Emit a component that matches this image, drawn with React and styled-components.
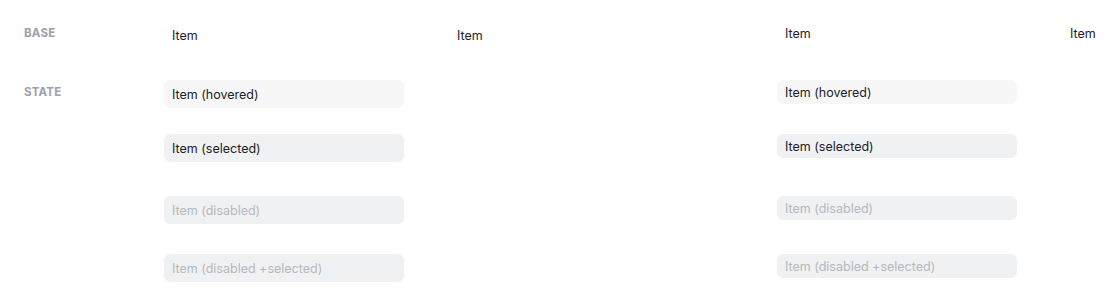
import React from 'react';
import styled, { createGlobalStyle } from 'styled-components';

const GlobalStyle = createGlobalStyle`
  body {
    margin: 0;
    background: #fff;
    font-family: Inter, "Noto Sans", sans-serif;
    overflow: hidden;
  }
`;

const Page = styled.div`
  width: 1120px;
  height: 306px;
  overflow: hidden;
`;

const Row = styled.div`
  display: flex;
  padding-top: ${p => p.$top}px;
  height: ${p => p.$height}px;
  box-sizing: border-box;
`;

const Label = styled.div`
  flex: 0 0 140px;
  padding-left: 24px;
  font-size: 11.5px;
  font-weight: 700;
  letter-spacing: 0.2px;
  line-height: 24px;
  color: #9ba1ab;
  text-transform: uppercase;
`;

const Group = styled.div`
  flex: 0 0 613px;
  display: flex;
  gap: 45px;
`;

const Column = styled.div`
  flex: 0 0 ${p => (p.$wide ? 240 : 328)}px;
  display: flex;
  flex-direction: column;
`;

const Slot = styled.div`
  height: ${p => p.$h}px;
`;

const Item = styled.div`
  width: 240px;
  height: ${p => (p.$compact ? 24 : 28)}px;
  box-sizing: border-box;
  padding: 0 8px;
  display: flex;
  align-items: center;
  border-radius: 6px;
  font-size: 12.5px;
  color: ${p => (p.$state === 'disabled' ? '#b4b8bf' : '#1d2127')};
  background: ${p =>
    p.$state === 'hovered' ? '#f7f7f8' : p.$state === 'base' ? 'transparent' : '#f0f1f3'};
`;

const states = [
  { text: 'Item (hovered)', state: 'hovered', slot: 54 },
  { text: 'Item (selected)', state: 'selected', slot: 62 },
  { text: 'Item (disabled)', state: 'disabled', slot: 58 },
  { text: 'Item (disabled +selected)', state: 'disabled', slot: 30 },
];

const groups = [{ compact: false }, { compact: true }];

const App = () => {
  return (
    <Page>
      <GlobalStyle />
      <Row $top={21} $height={80}>
        <Label>Base</Label>
        {groups.map((g, i) => (
          <Group key={i}>
            <Column $wide>
              <Item $compact={g.compact} $state="base">Item</Item>
            </Column>
            <Column>
              <Item $compact={g.compact} $state="base">Item</Item>
            </Column>
          </Group>
        ))}
      </Row>
      <Row $top={0} $height={226}>
        <Label>State</Label>
        {groups.map((g, i) => (
          <Group key={i}>
            <Column $wide>
              {states.map(s => (
                <Slot key={s.text} $h={s.slot}>
                  <Item $compact={g.compact} $state={s.state}>{s.text}</Item>
                </Slot>
              ))}
            </Column>
            <Column />
          </Group>
        ))}
      </Row>
    </Page>
  );
};

export default App;
